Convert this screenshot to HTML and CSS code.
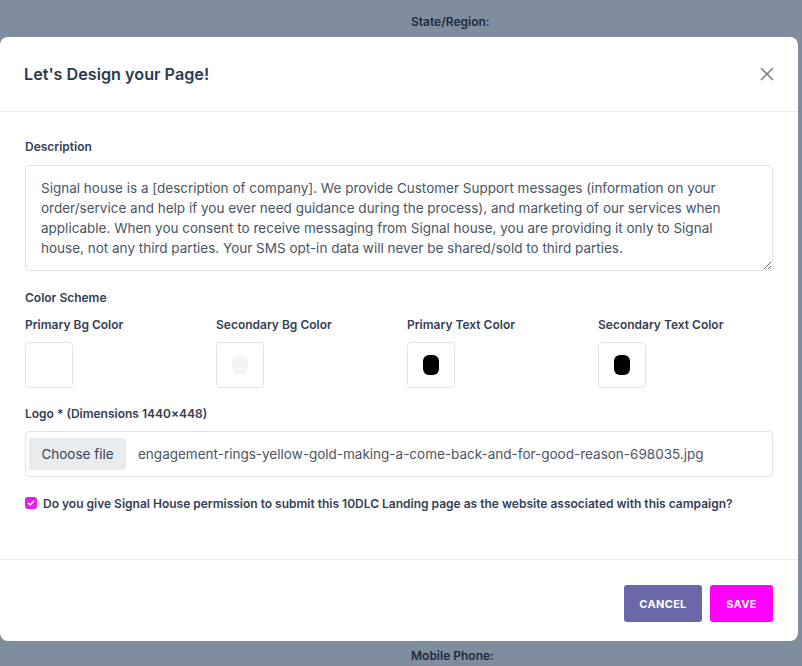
FILE: index.html
```html
<!DOCTYPE html>
<html lang="en">
<head>
<meta charset="utf-8">
<title>Let's Design your Page!</title>
<link rel="stylesheet" href="styles.css">
</head>
<body>
<div class="backdrop-page">
  <div class="bg-label bg-top">State/Region:</div>
  <div class="bg-label bg-bottom">Mobile Phone:</div>
</div>

<div class="modal">
  <div class="modal-header">
    <h2 class="modal-title">Let's Design your Page!</h2>
    <button class="close" aria-label="Close">
      <svg width="14" height="14" viewBox="0 0 14 14"><path d="M1 1L13 13M13 1L1 13" stroke="#6c757d" stroke-width="1.4" fill="none"/></svg>
    </button>
  </div>

  <div class="modal-body">
    <label class="label">Description</label>
    <textarea class="textarea" rows="4" readonly>Signal house is a [description of company]. We provide Customer Support messages (information on your order/service and help if you ever need guidance during the process), and marketing of our services when applicable. When you consent to receive messaging from Signal house, you are providing it only to Signal house, not any third parties. Your SMS opt-in data will never be shared/sold to third parties.</textarea>

    <div class="label section">Color Scheme</div>
    <div class="colors">
      <div class="color-field">
        <div class="label">Primary Bg Color</div>
        <div class="swatch"></div>
      </div>
      <div class="color-field">
        <div class="label">Secondary Bg Color</div>
        <div class="swatch"><span class="chip chip-light"></span></div>
      </div>
      <div class="color-field">
        <div class="label">Primary Text Color</div>
        <div class="swatch"><span class="chip chip-dark"></span></div>
      </div>
      <div class="color-field">
        <div class="label">Secondary Text Color</div>
        <div class="swatch"><span class="chip chip-dark"></span></div>
      </div>
    </div>

    <div class="label section-logo">Logo * (Dimensions 1440×448)</div>
    <div class="file-input">
      <span class="file-btn">Choose file</span>
      <span class="file-name">engagement-rings-yellow-gold-making-a-come-back-and-for-good-reason-698035.jpg</span>
    </div>

    <div class="check-row">
      <span class="checkbox">
        <svg width="8" height="8" viewBox="0 0 8 8"><path d="M1.3 4.2L3.2 6L6.8 2" stroke="#fff" stroke-width="1.4" fill="none" stroke-linecap="round" stroke-linejoin="round"/></svg>
      </span>
      <span class="check-label">Do you give Signal House permission to submit this 10DLC Landing page as the website associated with this campaign?</span>
    </div>
  </div>

  <div class="modal-footer">
    <button class="btn btn-cancel">Cancel</button>
    <button class="btn btn-save">Save</button>
  </div>
</div>
</body>
</html>
```

FILE: styles.css
```css
* { box-sizing: border-box; }

html, body {
  margin: 0;
  padding: 0;
  width: 802px;
  height: 666px;
  overflow: hidden;
}

body {
  background: #7f8e9e;
  font-family: Inter, "Noto Sans", sans-serif;
  color: #344054;
  position: relative;
}

.backdrop-page {
  position: absolute;
  inset: 0;
}

.bg-label {
  position: absolute;
  left: 411px;
  font-size: 12px;
  font-weight: 600;
  color: #1d2b40;
}
.bg-top { top: 14px; }
.bg-bottom { top: 648px; }

.modal {
  position: absolute;
  left: 0;
  top: 37px;
  width: 798px;
  height: 604px;
  background: #fff;
  border-radius: 8px;
  display: flex;
  flex-direction: column;
}

.modal-header {
  height: 75px;
  padding: 0 24px 0 24px;
  display: flex;
  align-items: center;
  justify-content: space-between;
  border-bottom: 1px solid #e9ebec;
}

.modal-title {
  margin: 0;
  font-size: 16.2px;
  font-weight: 600;
  color: #2c3a4e;
}

.close {
  background: none;
  border: 0;
  padding: 0;
  margin-right: 0;
  width: 14px;
  height: 14px;
  display: flex;
  cursor: pointer;
}

.modal-body {
  flex: 1;
  padding: 26px 25px 0 25px;
}

.label {
  display: block;
  font-size: 12px;
  font-weight: 600;
  line-height: 18px;
  color: #344054;
}

.textarea {
  display: block;
  width: 748px;
  height: 106px;
  margin-top: 9px;
  padding: 12px 15px;
  border: 1px solid #e2e5e8;
  border-radius: 4px;
  font-family: Inter, "Noto Sans", sans-serif;
  font-size: 13.5px;
  line-height: 20px;
  color: #4b5563;
  resize: vertical;
  outline: none;
  overflow: hidden;
}

.section { margin-top: 18px; }

.colors {
  display: grid;
  grid-template-columns: repeat(4, 175px);
  column-gap: 16px;
  margin-top: 9px;
}

.swatch {
  margin-top: 8px;
  width: 48px;
  height: 46px;
  border: 1px solid #e2e5e8;
  border-radius: 4px;
  display: flex;
  align-items: center;
  justify-content: center;
  background: #fff;
}

.chip {
  width: 16px;
  height: 20px;
  border-radius: 6px;
}
.chip-light { background: #f4f4f5; }
.chip-dark { background: #000; }

.section-logo { margin-top: 17px; }

.file-input {
  margin-top: 8px;
  width: 748px;
  height: 46px;
  border: 1px solid #e2e5e8;
  border-radius: 4px;
  padding: 6px 3px;
  display: flex;
  align-items: center;
}

.file-btn {
  height: 32px;
  width: 97px;
  background: #e9ecef;
  border-radius: 2px;
  display: flex;
  align-items: center;
  justify-content: center;
  font-size: 13.5px;
  color: #3b4452;
}

.file-name {
  margin-left: 12px;
  font-size: 13.5px;
  color: #4b5563;
  white-space: nowrap;
}

.check-row {
  margin-top: 17px;
  display: flex;
  align-items: center;
  height: 18px;
}

.checkbox {
  width: 12px;
  height: 12px;
  border-radius: 3px;
  background: #e81ce8;
  display: flex;
  align-items: center;
  justify-content: center;
  margin-right: 6px;
}

.check-label {
  font-size: 12px;
  font-weight: 600;
  color: #344054;
}

.modal-footer {
  height: 82px;
  border-top: 1px solid #e9ebec;
  padding: 25px 25px 0 0;
  display: flex;
  justify-content: flex-end;
  gap: 8px;
}

.btn {
  height: 37px;
  border: 0;
  border-radius: 3px;
  color: #fff;
  font-family: Inter, "Noto Sans", sans-serif;
  font-size: 11px;
  font-weight: 700;
  text-transform: uppercase;
  letter-spacing: 0.3px;
  cursor: pointer;
}

.btn-cancel { width: 78px; background: #6b68aa; }
.btn-save { width: 63px; background: #ff00ff; }
```
